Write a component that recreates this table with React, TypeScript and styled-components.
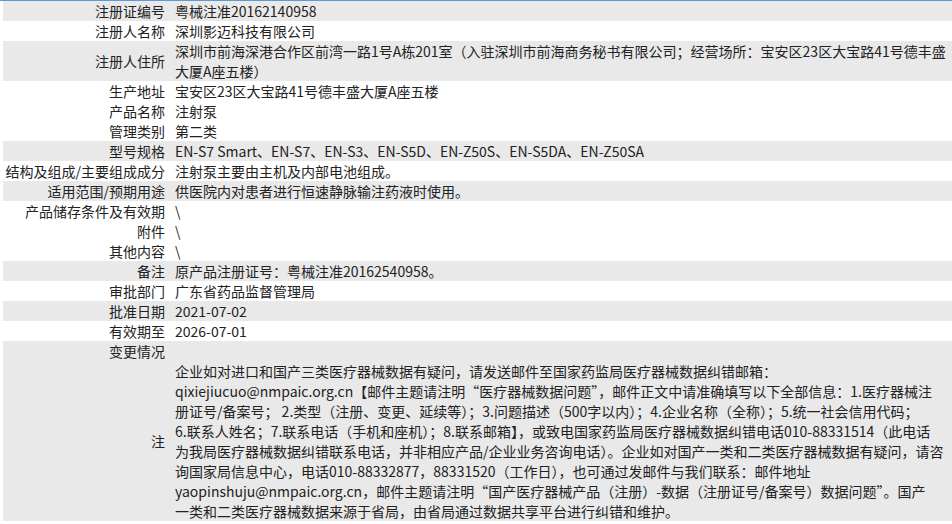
import React from 'react';
import styled, { createGlobalStyle } from 'styled-components';

const GlobalStyle = createGlobalStyle`
  html, body {
    margin: 0;
    padding: 0;
    background: #ffffff;
  }
  body {
    font-family: "Noto Sans CJK SC", "Microsoft YaHei", sans-serif;
    font-size: 14px;
    color: #222222;
  }
`;

const Page = styled.div`
  width: 952px;
  height: 524px;
  overflow: hidden;
  border-top: 1px solid #5b9bd5;
  box-sizing: border-box;
  padding-left: 3px;
`;

const Table = styled.table`
  width: 949px;
  border-collapse: collapse;
  table-layout: fixed;
`;

const Row = styled.tr<{ $shade?: boolean }>`
  background-color: ${({ $shade }) => ($shade ? '#e9e9e9' : '#ffffff')};
`;

const Label = styled.td`
  width: 162px;
  padding: 0 5px 0 0;
  text-align: right;
  vertical-align: middle;
  line-height: 20px;
  white-space: nowrap;
  letter-spacing: 0;
`;

const Value = styled.td`
  padding: 0 0 0 5px;
  text-align: left;
  vertical-align: top;
  line-height: 20px;
`;

const Line = styled.div`
  white-space: nowrap;
  height: 20px;
`;

type Item = { label: string; lines: string[]; shade?: boolean };

const items: Item[] = [
  { label: '注册证编号', lines: ['粤械注准20162140958'], shade: true },
  { label: '注册人名称', lines: ['深圳影迈科技有限公司'] },
  {
    label: '注册人住所',
    lines: [
      '深圳市前海深港合作区前湾一路1号A栋201室（入驻深圳市前海商务秘书有限公司；经营场所：宝安区23区大宝路41号德丰盛',
      '大厦A座五楼）',
    ],
    shade: true,
  },
  { label: '生产地址', lines: ['宝安区23区大宝路41号德丰盛大厦A座五楼'] },
  { label: '产品名称', lines: ['注射泵'] },
  { label: '管理类别', lines: ['第二类'] },
  {
    label: '型号规格',
    lines: ['EN-S7 Smart、EN-S7、EN-S3、EN-S5D、EN-Z50S、EN-S5DA、EN-Z50SA'],
    shade: true,
  },
  { label: '结构及组成/主要组成成分', lines: ['注射泵主要由主机及内部电池组成。'] },
  { label: '适用范围/预期用途', lines: ['供医院内对患者进行恒速静脉输注药液时使用。'], shade: true },
  { label: '产品储存条件及有效期', lines: ['\\'] },
  { label: '附件', lines: ['\\'] },
  { label: '其他内容', lines: ['\\'] },
  { label: '备注', lines: ['原产品注册证号：粤械注准20162540958。'], shade: true },
  { label: '审批部门', lines: ['广东省药品监督管理局'] },
  { label: '批准日期', lines: ['2021-07-02'], shade: true },
  { label: '有效期至', lines: ['2026-07-01'] },
  { label: '变更情况', lines: [''], shade: true },
  {
    label: '注',
    lines: [
      '企业如对进口和国产三类医疗器械数据有疑问，请发送邮件至国家药监局医疗器械数据纠错邮箱：',
      'qixiejiucuo@nmpaic.org.cn【邮件主题请注明“医疗器械数据问题”，邮件正文中请准确填写以下全部信息：1.医疗器械注',
      '册证号/备案号； 2.类型（注册、变更、延续等）；3.问题描述（500字以内）；4.企业名称（全称）；5.统一社会信用代码；',
      '6.联系人姓名；7.联系电话（手机和座机）；8.联系邮箱】，或致电国家药监局医疗器械数据纠错电话010-88331514（此电话',
      '为我局医疗器械数据纠错联系电话，并非相应产品/企业业务咨询电话）。企业如对国产一类和二类医疗器械数据有疑问，请咨',
      '询国家局信息中心，电话010-88332877，88331520（工作日），也可通过发邮件与我们联系：邮件地址',
      'yaopinshuju@nmpaic.org.cn，邮件主题请注明“国产医疗器械产品（注册）-数据（注册证号/备案号）数据问题”。国产',
      '一类和二类医疗器械数据来源于省局，由省局通过数据共享平台进行纠错和维护。',
    ],
    shade: true,
  },
];

export default function App() {
  return (
    <>
      <GlobalStyle />
      <Page>
        <Table>
          <tbody>
            {items.map((item) => (
              <Row key={item.label} $shade={item.shade}>
                <Label>{item.label}</Label>
                <Value>
                  {item.lines.map((line, i) => (
                    <Line key={i}>{line}</Line>
                  ))}
                </Value>
              </Row>
            ))}
          </tbody>
        </Table>
      </Page>
    </>
  );
}
